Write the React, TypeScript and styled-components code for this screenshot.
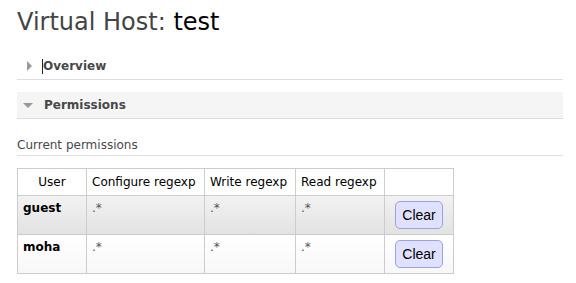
import styled, { createGlobalStyle } from "styled-components";
import React from "react";

const GlobalStyle = createGlobalStyle`
  body {
    margin: 0;
    background: #fff;
    font-family: "DejaVu Sans", Verdana, sans-serif;
    font-size: 12px;
    color: #484848;
  }
`;

const Page = styled.div`
  padding: 0 13px 0 17px;
`;

const Title = styled.h1`
  margin: 7px 0 0;
  font-size: 24px;
  line-height: 30px;
  font-weight: normal;
  color: #444;

  b {
    font-weight: normal;
    color: #000;
  }
`;

const Section = styled.div<{ $first?: boolean }>`
  margin-top: ${(p) => (p.$first ? "16px" : "12px")};
`;

const SectionHeader = styled.div<{ $open?: boolean }>`
  display: flex;
  align-items: center;
  height: 26px;
  border-bottom: 1px solid #ddd;
  background: ${(p) => (p.$open ? "#f5f5f5" : "transparent")};
  font-weight: bold;
  font-size: 12px;
  color: #484848;
`;

const Arrow = styled.span<{ $open?: boolean }>`
  width: 0;
  height: 0;
  ${(p) =>
    p.$open
      ? `
    margin: 1px 11px 0 6px;
    border-left: 5px solid transparent;
    border-right: 5px solid transparent;
    border-top: 5px solid #999;
  `
      : `
    margin: 0 11px 0 10px;
    border-top: 5px solid transparent;
    border-bottom: 5px solid transparent;
    border-left: 5px solid #999;
  `}
`;

const Caret = styled.span`
  width: 1px;
  height: 15px;
  margin-left: -1px;
  background: #222;
`;

const SubTitle = styled.div`
  margin-top: 19px;
  padding-bottom: 2px;
  line-height: 15px;
  border-bottom: 1px solid #ddd;
  color: #484848;
`;

const Table = styled.table`
  margin-top: 12px;
  border-collapse: collapse;
  table-layout: fixed;
  font-size: 12px;
  color: #000;
`;

const Th = styled.th<{ $w: number; $center?: boolean }>`
  width: ${(p) => p.$w}px;
  height: 16px;
  padding: 5px;
  border: 1px solid #ccc;
  font-weight: normal;
  text-align: ${(p) => (p.$center ? "center" : "left")};
  line-height: 16px;
  white-space: nowrap;
  background: #fff;
`;

const Row = styled.tr<{ $alt?: boolean }>`
  background: ${(p) =>
    p.$alt
      ? "linear-gradient(#f2f2f2, #e2e2e2)"
      : "linear-gradient(#fff, #f7f7f7)"};
`;

const Td = styled.td<{ $bold?: boolean }>`
  padding: 5px;
  border: 1px solid #ccc;
  vertical-align: top;
  line-height: 15px;
  font-weight: ${(p) => (p.$bold ? "bold" : "normal")};
  color: ${(p) => (p.$bold ? "#000" : "#555")};
`;

const ButtonCell = styled.td`
  padding: 5px 0 5px 10px;
  border: 1px solid #ccc;
  vertical-align: top;
`;

const ClearButton = styled.button`
  display: block;
  width: 48px;
  height: 28px;
  padding: 0;
  border: 1px solid #a0a0e0;
  border-radius: 5px;
  background: #e0e0ff;
  font-family: "Liberation Sans", Arial, sans-serif;
  font-size: 14px;
  color: #000;
  cursor: pointer;
`;

const users = ["guest", "moha"];

export default function App() {
  return (
    <Page>
      <GlobalStyle />
      <Title>
        Virtual Host: <b>test</b>
      </Title>
      <Section $first>
        <SectionHeader>
          <Arrow />
          <Caret />
          Overview
        </SectionHeader>
      </Section>
      <Section>
        <SectionHeader $open>
          <Arrow $open />
          Permissions
        </SectionHeader>
        <SubTitle>Current permissions</SubTitle>
        <Table>
          <thead>
            <tr>
              <Th $w={58} $center>
                User
              </Th>
              <Th $w={107}>Configure regexp</Th>
              <Th $w={80}>Write regexp</Th>
              <Th $w={78}>Read regexp</Th>
              <Th $w={58}></Th>
            </tr>
          </thead>
          <tbody>
            {users.map((u, i) => (
              <Row key={u} $alt={i % 2 === 0}>
                <Td $bold>{u}</Td>
                <Td>.*</Td>
                <Td>.*</Td>
                <Td>.*</Td>
                <ButtonCell>
                  <ClearButton>Clear</ClearButton>
                </ButtonCell>
              </Row>
            ))}
          </tbody>
        </Table>
      </Section>
    </Page>
  );
}
